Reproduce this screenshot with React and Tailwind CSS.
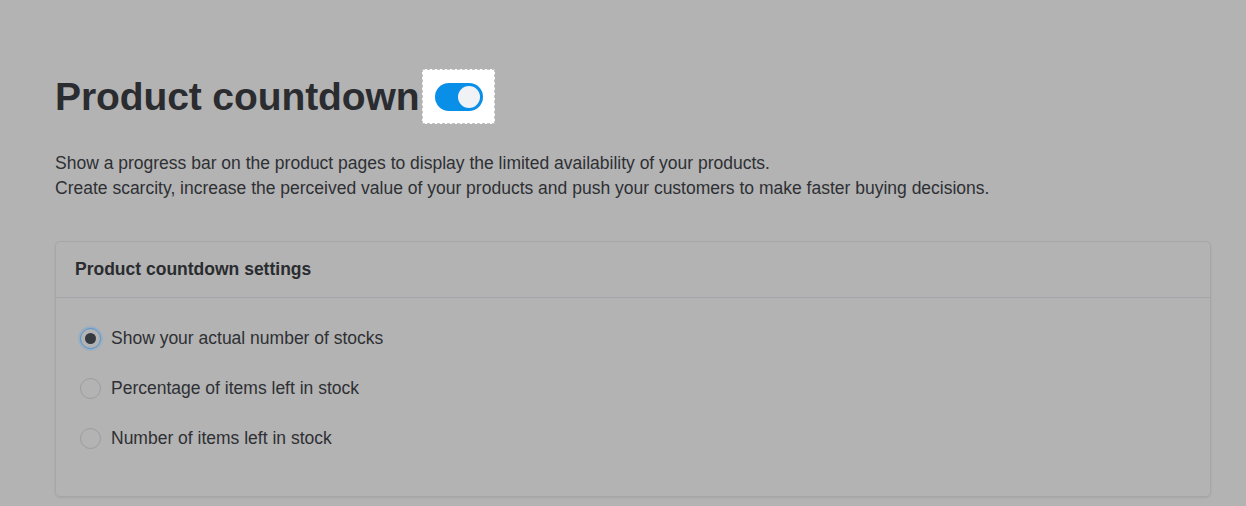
export default function App() {
  const options = [
    { label: 'Show your actual number of stocks', checked: true },
    { label: 'Percentage of items left in stock', checked: false },
    { label: 'Number of items left in stock', checked: false },
  ]

  return (
    <div className="min-h-[506px] bg-[#b3b3b3] font-['Liberation_Sans',Arial,sans-serif] text-[#2a2c30]">
      <main className="px-[55px] pt-[69px]">
        <div className="flex items-center">
          <h1 className="text-[39px] font-bold leading-[55px] tracking-[-0.1px]">
            Product countdown
          </h1>
          <div className="ml-[3px] flex h-[55px] w-[73px] items-center justify-center border border-dashed border-[#c4c4c4] bg-white">
            <button className="flex h-[28px] w-[48px] items-center justify-end rounded-full bg-[#0a8fe8] px-[3px]">
              <span className="block h-[22px] w-[22px] rounded-full bg-[#f1f2f5]" />
            </button>
          </div>
        </div>

        <div className="mt-[27px] text-[17.5px] leading-[25px] text-[#2e3033]">
          <p>Show a progress bar on the product pages to display the limited availability of your products.</p>
          <p>Create scarcity, increase the perceived value of your products and push your customers to make faster buying decisions.</p>
        </div>

        <section className="mt-[40px] w-[1156px] rounded-[5px] border border-[#a6a6a6] shadow-[0_1px_2px_rgba(0,0,0,0.08)]">
          <div className="flex h-[56px] items-center border-b border-[#a3a6aa] px-[19px]">
            <h2 className="text-[17.5px] font-bold text-[#2a2c30]">Product countdown settings</h2>
          </div>
          <div className="px-[24px] pb-[33px] pt-[15px]">
            {options.map((opt, i) => (
              <label key={i} className="flex h-[50px] items-center gap-[10px] text-[17.5px] text-[#2e3033]">
                {opt.checked ? (
                  <span className="flex h-[21px] w-[21px] items-center justify-center rounded-full border border-[#4f93cf] shadow-[0_0_0_2px_rgba(110,165,220,0.35)]">
                    <span className="block h-[11px] w-[11px] rounded-full bg-[#343a40]" />
                  </span>
                ) : (
                  <span className="block h-[21px] w-[21px] rounded-full border border-[#9c9c9c]" />
                )}
                {opt.label}
              </label>
            ))}
          </div>
        </section>
      </main>
    </div>
  )
}
